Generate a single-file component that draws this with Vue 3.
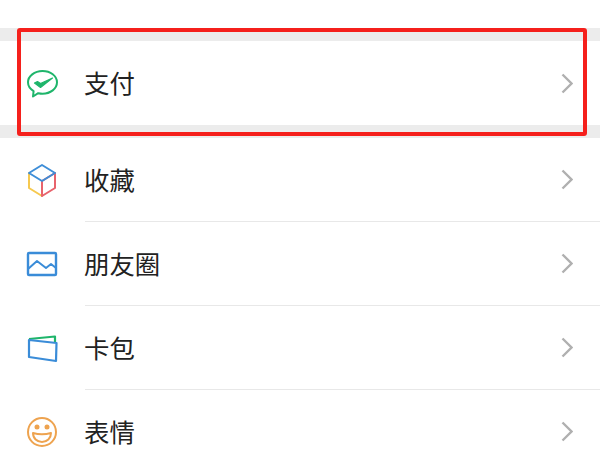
<script setup>
const rows = [
  { name: '收藏', icon: 'cube' },
  { name: '朋友圈', icon: 'photo' },
  { name: '卡包', icon: 'card' },
  { name: '表情', icon: 'smile' },
]
</script>

<template>
  <div class="page">
    <div class="top"></div>
    <div class="band"></div>
    <div class="row pay">
      <div class="icon">
        <svg width="34" height="34" viewBox="0 0 34 34" fill="none">
          <path d="M17.500 5C9.500 5 3 10.200 3 16.300c0 3.500 2.200 6.700 5.600 8.800L8 30.500l5.200-3.300c1.400.3 2.800.5 4.300.5 8 0 14.500-5.100 14.500-11.400S25.500 5 17.500 5Z" stroke="#1fb56b" stroke-width="2" stroke-linejoin="round"/>
          <path d="M9.500 17L12.500 15.500 15.500 17.500 27.500 12 15.500 21.500Z" fill="#1fb56b" stroke="#1fb56b" stroke-width="1.200" stroke-linejoin="round"/>
        </svg>
      </div>
      <div class="body">
        <span class="label">支付</span>
        <svg class="chev" width="12" height="21" viewBox="0 0 12 21" fill="none"><path d="M1.500 1.500l9 9-9 9" stroke="#b0b0b0" stroke-width="2.400"/></svg>
      </div>
    </div>
    <div class="band"></div>
    <div v-for="r in rows" :key="r.name" class="row">
      <div class="icon">
        <svg v-if="r.icon === 'cube'" width="34" height="34" viewBox="0 0 34 34" fill="none" stroke-width="2" stroke-linejoin="round" stroke-linecap="round">
          <path d="M4 10v15l13 8" stroke="#f6c950"/>
          <path d="M30 10v15l-13 8V18Z" stroke="#e8636c"/>
          <path d="M17 2l13 8-13 8-13-8Z" stroke="#3e8ed8"/>
        </svg>
        <svg v-else-if="r.icon === 'photo'" width="34" height="34" viewBox="0 0 34 34" fill="none" stroke="#3a8cd8" stroke-width="2.400" stroke-linejoin="round">
          <rect x="3" y="6" width="28" height="22" rx="1"/>
          <path d="M3 22l9-8 9 7 5-4 5 4" stroke-width="2"/>
        </svg>
        <svg v-else-if="r.icon === 'card'" width="34" height="34" viewBox="0 0 34 34" fill="none" stroke-width="2.200" stroke-linejoin="round">
          <path d="M4 8l26-2.500V12" stroke="#1fb56b"/>
          <path d="M4 9l27.500 3L31 30 4 26Z" stroke="#3a8cd8"/>
        </svg>
        <svg v-else width="34" height="34" viewBox="0 0 34 34" fill="none">
          <circle cx="17" cy="17" r="14" stroke="#eea34f" stroke-width="2"/>
          <circle cx="12" cy="12" r="2.500" fill="#eea34f"/>
          <circle cx="22" cy="12" r="2.500" fill="#eea34f"/>
          <path d="M8 18q9 2.500 18 0c0 5.500-4 9-9 9s-9-3.500-9-9Z" stroke="#eea34f" stroke-width="2" stroke-linejoin="round"/>
        </svg>
      </div>
      <div class="body">
        <span class="label">{{ r.name }}</span>
        <svg class="chev" width="12" height="21" viewBox="0 0 12 21" fill="none"><path d="M1.500 1.500l9 9-9 9" stroke="#b0b0b0" stroke-width="2.400"/></svg>
      </div>
    </div>
    <div class="mark"></div>
  </div>
</template>

<style scoped>
.page {
  position: relative;
  width: 600px;
  height: 450px;
  overflow: hidden;
  background: #fff;
  font-family: "Noto Sans CJK SC", "Liberation Sans", sans-serif;
}
.top { height: 28px; }
.band { height: 13px; background: #ececec; }
.row {
  display: flex;
  height: 84px;
  padding-left: 25px;
}
.icon {
  width: 60px;
  flex: none;
  display: flex;
  align-items: center;
}
.body {
  flex: 1;
  display: flex;
  align-items: center;
  justify-content: space-between;
  padding-right: 27px;
  border-bottom: 1px solid #e8e8e8;
}
.pay .body { border-bottom: 0; }
.label {
  margin-left: -1px;
  font-size: 25.400px;
  line-height: 1;
  color: #222;
}
.mark {
  position: absolute;
  left: 17px;
  top: 28px;
  width: 562px;
  height: 100px;
  border: 4px solid #f5201c;
  border-radius: 3px;
}
</style>
